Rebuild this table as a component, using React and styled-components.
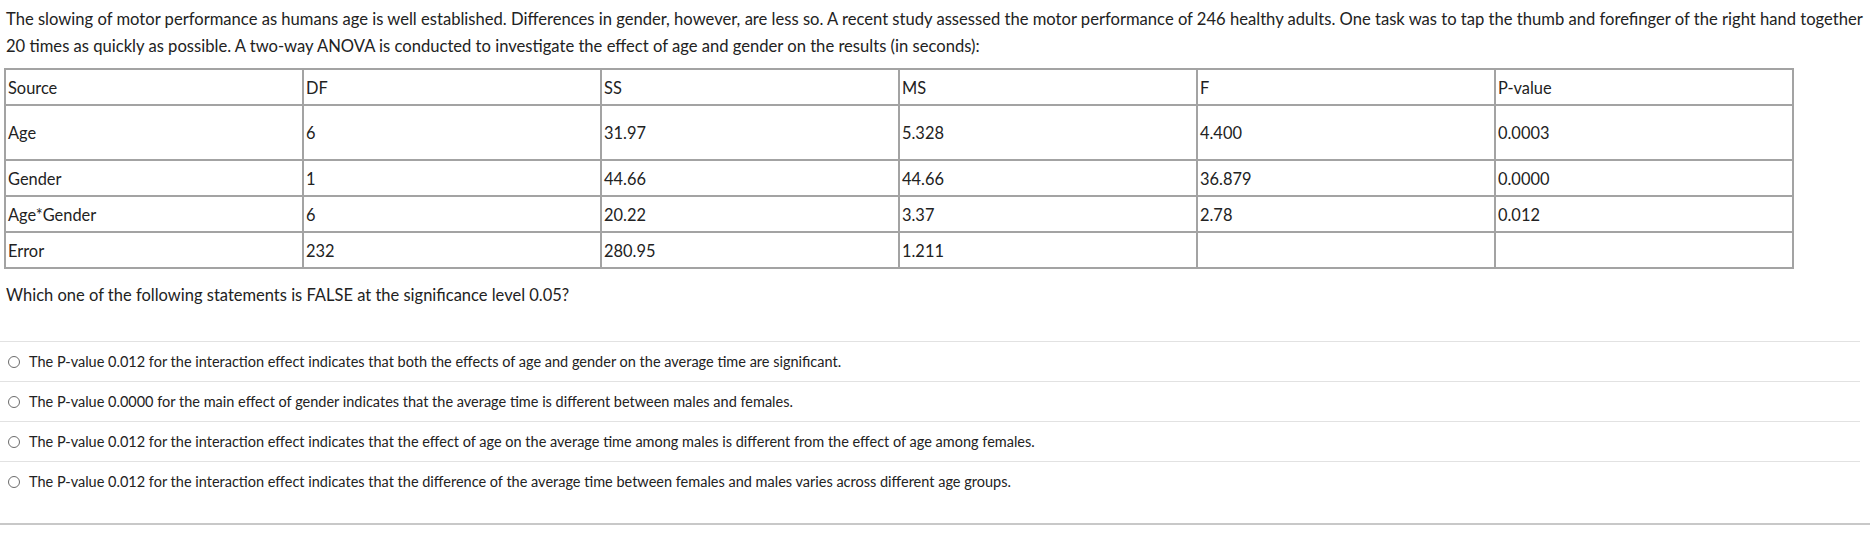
import React from "react";
import styled, { createGlobalStyle } from "styled-components";

const GlobalStyle = createGlobalStyle`
  html, body {
    margin: 0;
    padding: 0;
    background: #ffffff;
  }
  body {
    font-family: Lato, "Open Sans", sans-serif;
    color: #222222;
  }
`;

const Page = styled.div`
  width: 1870px;
  padding: 6px 0 0 0;
`;

const Intro = styled.p`
  margin: 0 4px 0 6px;
  font-size: 16.6px;
  line-height: 27px;
`;

const Table = styled.table`
  margin: 8px 0 0 4px;
  width: 1790px;
  border-collapse: collapse;
  table-layout: fixed;
  font-size: 16.4px;
`;

const Row = styled.tr`
  height: ${({ tall }) => (tall ? "55px" : "36px")};
`;

const Cell = styled.td`
  border: 2px solid #a3a3a3;
  padding: 0 2px;
  vertical-align: middle;
`;

const Question = styled.p`
  margin: 14px 0 0 6px;
  font-size: 16.5px;
  line-height: 24px;
`;

const Options = styled.div`
  margin: 34px 10px 0 0;
`;

const Option = styled.label`
  display: flex;
  align-items: center;
  gap: 9px;
  height: 39px;
  padding-left: 8px;
  border-top: 1px solid #e2e2e2;
  font-size: 14.5px;
`;

const Radio = styled.span`
  width: 10px;
  height: 10px;
  border: 1px solid #6b6b6b;
  border-radius: 50%;
  flex-shrink: 0;
`;

const Footer = styled.div`
  margin-top: 22px;
  height: 2px;
  background: #c8c8c8;
`;

const rows = [
  ["Source", "DF", "SS", "MS", "F", "P-value"],
  ["Age", "6", "31.97", "5.328", "4.400", "0.0003"],
  ["Gender", "1", "44.66", "44.66", "36.879", "0.0000"],
  ["Age*Gender", "6", "20.22", "3.37", "2.78", "0.012"],
  ["Error", "232", "280.95", "1.211", "", ""],
];

const options = [
  "The P-value 0.012 for the interaction effect indicates that both the effects of age and gender on the average time are significant.",
  "The P-value 0.0000 for the main effect of gender indicates that the average time is different between males and females.",
  "The P-value 0.012 for the interaction effect indicates that the effect of age on the average time among males is different from the effect of age among females.",
  "The P-value 0.012 for the interaction effect indicates that the difference of the average time between females and males varies across different age groups.",
];

export default function App() {
  return (
    <Page>
      <GlobalStyle />
      <Intro>
        The slowing of motor performance as humans age is well established. Differences in gender, however, are less so. A recent study assessed the motor performance of 246 healthy adults. One task was to tap the thumb and forefinger of the right hand together 20 times as quickly as possible. A two-way ANOVA is conducted to investigate the effect of age and gender on the results (in seconds):
      </Intro>
      <Table>
        <tbody>
          {rows.map((r, i) => (
            <Row key={i} tall={i === 1}>
              {r.map((c, j) => (
                <Cell key={j}>{c}</Cell>
              ))}
            </Row>
          ))}
        </tbody>
      </Table>
      <Question>Which one of the following statements is FALSE at the significance level 0.05?</Question>
      <Options>
        {options.map((o, i) => (
          <Option key={i}>
            <Radio />
            {o}
          </Option>
        ))}
      </Options>
      <Footer />
    </Page>
  );
}
